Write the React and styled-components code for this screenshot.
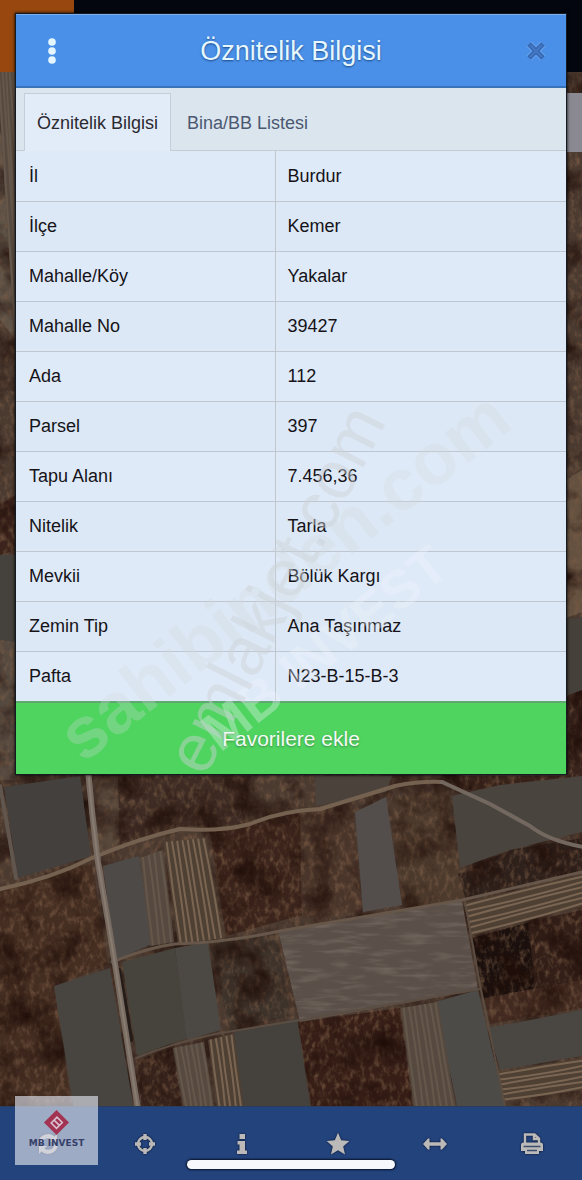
import React, { useState } from 'react';
import styled, { createGlobalStyle } from 'styled-components';

const GlobalStyle = createGlobalStyle`
    * {
        box-sizing: border-box;
    }

    body {
        margin: 0;
        background: #40362f;
        font-family: "Liberation Sans", Arial, Helvetica, sans-serif;
    }

    button {
        font-family: inherit;
        border: none;
        cursor: pointer;
    }
`;

const Screen = styled.main`
    position: relative;
    display: grid;
    grid-template-columns: minmax(0, 1fr);
    min-height: 100vh;
    overflow: hidden;
`;

const MapView = styled.div`
    grid-area: 1 / 1;
    display: flex;
    flex-direction: column;
`;

const TopBar = styled.div`
    display: flex;
    height: 72px;
    background: #03050f;
`;

const TopBarLogo = styled.div`
    width: 74px;
    background: #98480f;
`;

const MapArea = styled.div`
    position: relative;
    flex: 1;
`;

const MapImage = styled.svg`
    position: absolute;
    width: 100%;
    height: 100%;
`;

const MapControl = styled.div`
    position: absolute;
    top: 21px;
    right: 0;
    width: 40px;
    height: 59px;
    background: #8a8992;
`;

const Toolbar = styled.nav`
    position: relative;
    display: flex;
    height: 74px;
    padding-right: 2px;
    background: #23437c;
    border-top: 1px solid #2c3c5c;
`;

const ToolButton = styled.button`
    flex: 1;
    display: flex;
    align-items: center;
    justify-content: center;
    padding: 0;
    background: transparent;
    color: #bcbab8;

    svg {
        width: 24px;
        height: 24px;
        filter: drop-shadow(0 0 1px #08142c);
    }
`;

const HomeIndicator = styled.div`
    position: absolute;
    left: 50%;
    bottom: 11px;
    width: 208px;
    height: 9px;
    transform: translateX(-50%);
    border-radius: 5px;
    background: #f6f8fc;
    box-shadow: 0 0 2px 1px #081226;
`;

const Badge = styled.div`
    position: absolute;
    left: 15px;
    bottom: 15px;
    display: flex;
    flex-direction: column;
    align-items: center;
    width: 83px;
    height: 69px;
    padding-top: 13px;
    background: rgba(222, 224, 236, 0.66);

    svg {
        width: 27px;
        height: 27px;
    }
`;

const BadgeText = styled.span`
    margin-top: 2px;
    color: #36406a;
    font-family: "DejaVu Sans", sans-serif;
    font-size: 9px;
    font-weight: bold;
    line-height: 10px;
    white-space: nowrap;
`;

const Overlay = styled.div`
    grid-area: 1 / 1;
    z-index: 10;
    align-self: start;
    padding: 14px 16px;
`;

const Dialog = styled.section`
    display: flex;
    flex-direction: column;
    background: #dfeaf7;
    box-shadow: 0 0 0 1px #151b22, 0 0 3px 1px #000;
`;

const DialogHeader = styled.header`
    display: grid;
    grid-template-columns: 60px minmax(0, 1fr) 60px;
    align-items: center;
    height: 74px;
    background: #4a90e8;
    border-top: 1px solid #7eaeea;
    border-bottom: 2px solid #3a74b8;
`;

const DialogTitle = styled.h1`
    margin: 0;
    color: #e6f7ff;
    font-size: 27px;
    font-weight: normal;
    line-height: 32px;
    text-align: center;
    text-shadow: 0 1px 2px #1d4a86;
`;

const HeaderButton = styled.button`
    display: flex;
    align-items: center;
    justify-content: center;
    height: 44px;
    padding: 0;
    margin: 0 0 0 ${p => p.$inset || '0'};
    background: transparent;

    svg {
        width: 28px;
        height: 28px;
    }
`;

const Tabs = styled.div`
    display: flex;
    height: 63px;
    padding: 5px 8px 0;
    background: #dae5ee;
    border-bottom: 1px solid #c3cbd3;
`;

const Tab = styled.button`
    padding: 0 ${p => (p.$active ? '12px' : '15px')};
    margin-bottom: -1px;
    background: ${p => (p.$active ? '#e2ecf9' : 'transparent')};
    border: 1px solid ${p => (p.$active ? '#c5ced8' : 'transparent')};
    border-bottom: none;
    color: ${p => (p.$active ? '#2c2a30' : '#4c5872')};
    font-size: 18px;
    line-height: 22px;
    white-space: nowrap;
`;

const InfoTable = styled.table`
    width: 100%;
    table-layout: fixed;
    border-collapse: collapse;
    color: #151318;
    font-size: 18px;
    line-height: 22px;
`;

const Row = styled.tr`
    height: 50px;
    background: #dfeaf8;

    &:nth-child(even) {
        background: #dce8f5;
    }

    & + & {
        border-top: 1px solid #c0c6cf;
    }
`;

const Label = styled.th`
    width: 259px;
    padding: 0 13px;
    border-right: 1px solid #bfc6ce;
    font-weight: normal;
    text-align: left;
`;

const Value = styled.td`
    padding: 0 12px;
`;

const FavoriteButton = styled.button`
    height: 73px;
    padding: 0;
    background: #4fd45f;
    border-top: 2px solid #60a870;
    color: #f3fbf3;
    font-size: 21px;
    line-height: 26px;
    text-shadow: 0 1px 2px #3a8a48;
`;

const Watermark = styled.svg`
    position: absolute;
    z-index: 20;
    top: 0;
    left: 0;
    width: 100%;
    aspect-ratio: 582 / 1180;
    pointer-events: none;
    font-family: "Liberation Sans", Arial, sans-serif;
`;

const rows = [
    ['İl', 'Burdur'],
    ['İlçe', 'Kemer'],
    ['Mahalle/Köy', 'Yakalar'],
    ['Mahalle No', '39427'],
    ['Ada', '112'],
    ['Parsel', '397'],
    ['Tapu Alanı', '7.456,36'],
    ['Nitelik', 'Tarla'],
    ['Mevkii', 'Bölük Kargı'],
    ['Zemin Tip', 'Ana Taşınmaz'],
    ['Pafta', 'N23-B-15-B-3'],
];

// soil parcels: rough, unploughed ground
const soil = [
    ['#4b3a30', '0,60 582,60 582,1110 0,1110'],
    ['#5e5246', '0,60 16,60 16,340 0,320'],
    ['#3c241c', '0,505 16,495 16,550 0,555'],
    ['#564a40', '0,640 16,640 16,780 0,780'],
    ['#655140', '566,480 582,470 582,612 566,618'],
    ['#39241d', '566,695 582,690 582,780 566,780'],
    ['#56463a', '88,776 118,776 120,840 100,858'],
    ['#3e2c24', '118,776 250,776 245,826 180,826 120,850'],
    ['#38231b', '450,776 582,776 540,785 460,790'],
    ['#3b241b', '210,832 300,812 302,915 226,936'],
    ['#4a352a', '300,812 352,802 362,912 303,918'],
    ['#4c3a2d', '390,800 446,786 466,898 403,908'],
    ['#2e201b', '458,874 510,850 582,838 582,872 466,900'],
    ['#442d21', '0,892 92,863 108,965 54,986 72,1110 0,1110'],
    ['#3e332b', '209,942 277,932 290,1016 230,1032'],
    ['#1b100d', '472,938 530,922 540,1000 484,1000'],
    ['#331f18', '528,922 582,910 582,990 536,996'],
    ['#422a20', '484,998 582,980 582,1008 490,1024'],
    ['#371f17', '298,1022 400,1008 413,1110 312,1110'],
    ['#37231b', '137,1060 172,1048 183,1110 142,1110'],
];

// flat grey parcels
const fallow = [
    ['#45423e', '0,555 16,555 16,642 0,640'],
    ['#454039', '566,620 582,617 582,690 566,696'],
    ['#44403d', '4,787 80,776 91,856 18,878'],
    ['#4b423c', '315,776 392,776 386,792 316,806'],
    ['#4a443e', '452,796 500,785 582,776 582,832 510,850 460,868'],
    ['#4d4a48', '103,866 139,856 152,944 115,960'],
    ['#534e4b', '355,812 386,797 402,905 363,912'],
    ['#48443f', '54,986 110,968 134,1110 74,1110'],
    ['#47433d', '122,962 175,948 187,1038 137,1056'],
    ['#4c4844', '175,948 208,942 221,1030 187,1040'],
    ['#45413c', '234,1032 297,1018 311,1110 243,1110'],
    ['#4d4b47', '435,1002 478,990 506,1110 458,1110'],
    ['#4a4742', '488,1028 582,1010 582,1056 500,1070'],
    ['#5a5049', '278,930 462,901 478,990 300,1022'],
];

// ploughed parcels, as the two edges that the furrows run along
const ploughed = [
    { from: [[140, 858], [150, 946]], to: [[163, 850], [174, 942]], n: 4, soft: true },
    { from: [[164, 842], [178, 944]], to: [[206, 838], [224, 938]], n: 8 },
    { from: [[464, 903], [582, 874]], to: [[471, 936], [582, 906]], n: 6 },
    { from: [[498, 1072], [582, 1058]], to: [[503, 1102], [582, 1090]], n: 6 },
    { from: [[401, 1008], [414, 1108]], to: [[438, 1002], [456, 1108]], n: 7, soft: true },
    { from: [[173, 1048], [184, 1108]], to: [[204, 1042], [214, 1108]], n: 6, soft: true },
    { from: [[208, 1040], [217, 1108]], to: [[234, 1034], [244, 1108]], n: 5 },
    { from: [[-3, 70], [14, 330]], to: [[15, 70], [30, 330]], n: 5, soft: true },
];

const mix = (a, b, t) => [a[0] + (b[0] - a[0]) * t, a[1] + (b[1] - a[1]) * t];

function Furrows({ from, to, n, soft }) {
    const lines = Array.from({ length: n }, (_, i) => {
        const t = (i + 0.5) / n;
        const [x1, y1] = mix(from[0], to[0], t);
        const [x2, y2] = mix(from[1], to[1], t);
        const bend = i % 2 ? 2 : -1;
        return `M${x1} ${y1} Q${(x1 + x2) / 2 + bend} ${(y1 + y2) / 2 + bend} ${x2} ${y2}`;
    });
    return (
        <g>
            <polygon points={[from[0], from[1], to[1], to[0]].join(' ')} fill={soft ? '#564a40' : '#4f4034'} />
            <path d={lines.join('')} fill="none" stroke={soft ? '#65574a' : '#7a6552'} strokeWidth="2" />
        </g>
    );
}

function SatelliteMap() {
    return (
        <MapImage viewBox="0 72 582 1034" preserveAspectRatio="xMidYMid slice" aria-hidden="true">
            <defs>
                <filter id="grain" x="0" y="0" width="100%" height="100%" colorInterpolationFilters="sRGB">
                    <feTurbulence type="fractalNoise" baseFrequency="0.2 0.12" numOctaves="4" seed="7" />
                    <feColorMatrix values="0 0 0 0 0.48  0 0 0 0 0.36  0 0 0 0 0.27  1.8 0 0 0 -0.82" result="light" />
                    <feTurbulence type="fractalNoise" baseFrequency="0.03 0.03" numOctaves="5" seed="3" />
                    <feColorMatrix values="0 0 0 0 0.12  0 0 0 0 0.05  0 0 0 0 0.03  0 2.2 0 0 -0.95" result="dark" />
                    <feMerge>
                        <feMergeNode in="SourceGraphic" />
                        <feMergeNode in="light" />
                        <feMergeNode in="dark" />
                    </feMerge>
                </filter>
                <filter id="streaks" x="0" y="0" width="100%" height="100%" colorInterpolationFilters="sRGB">
                    <feTurbulence type="fractalNoise" baseFrequency="0.03 0.18" numOctaves="3" seed="12" />
                    <feColorMatrix values="0 0 0 0 0.5  0 0 0 0 0.45  0 0 0 0 0.42  1.6 0 0 0 -0.75" />
                    <feComposite operator="in" in2="SourceAlpha" />
                </filter>
            </defs>
            <g filter="url(#grain)">
                {soil.map(([fill, points]) => <polygon key={points} fill={fill} points={points} />)}
            </g>
            {fallow.map(([fill, points]) => <polygon key={points} fill={fill} points={points} />)}
            <polygon points="278,930 462,901 478,990 300,1022" filter="url(#streaks)" />
            {ploughed.map(field => <Furrows key={field.from.join()} {...field} />)}
            <g fill="none" strokeLinecap="round" strokeLinejoin="round">
                <path d="M0 786 Q10 840 16 878" stroke="#61564d" strokeWidth="4" />
                <path d="M0 889 Q50 879 92 858 Q140 838 180 829 Q220 832 250 824 Q280 811 320 809 Q360 797 395 786 Q420 781 442 782" stroke="#75614f" strokeWidth="4" />
                <path d="M442 782 L490 804 L530 826 Q550 842 590 848" stroke="#736860" strokeWidth="4" />
                <path d="M112 962 Q150 947 175 944 Q230 942 280 931 L462 900 L582 872" stroke="#66574a" strokeWidth="3" />
                <path d="M136 1058 Q170 1044 215 1034 L300 1020 L480 989" stroke="#5b4d42" strokeWidth="2" />
                <path d="M465 902 L480 985 L505 1106" stroke="#5a4c40" strokeWidth="2" />
                <path d="M119 970 Q127 1010 131 1040" stroke="#231c18" strokeWidth="4" />
                <path d="M88 770 Q92 815 98 862 Q108 920 116 970 Q128 1045 138 1110" stroke="#776b61" strokeWidth="6" />
                <path d="M88 770 Q92 815 98 862 Q108 920 116 970 Q128 1045 138 1110" stroke="#887b70" strokeWidth="2" />
            </g>
        </MapImage>
    );
}

const stroked = { viewBox: '0 0 24 24', fill: 'none', stroke: 'currentColor', 'aria-hidden': true };

const tools = [
    {
        label: 'Yenile',
        icon: (
            <svg {...stroked} strokeWidth="4">
                <path d="M4 11a8 8 0 0 1 14-4M20 13a8 8 0 0 1-14 4" />
                <path d="M21 2v8h-8zM3 22v-8h8z" fill="currentColor" stroke="none" />
            </svg>
        ),
    },
    {
        label: 'Konum',
        icon: (
            <svg {...stroked} strokeWidth="2.4">
                <circle cx="12" cy="12" r="7" />
                <path d="M12 2v6M12 16v6M2 12h6M16 12h6" strokeWidth="3.4" />
            </svg>
        ),
    },
    {
        label: 'Bilgi',
        icon: (
            <svg {...stroked} fill="currentColor" stroke="none">
                <path d="M9.500 2h5.500v5H9.500zM7.500 9H15v9.500h2V22H7v-3.500h2.500v-6h-2z" />
            </svg>
        ),
    },
    {
        label: 'Favoriler',
        icon: (
            <svg {...stroked} fill="currentColor" stroke="none">
                <path d="M12 .8l3.200 7.500 8.100.700-6.100 5.400 1.800 8L12 18.200l-7 4.200 1.800-8L.7 9l8.100-.7z" />
            </svg>
        ),
    },
    {
        label: 'Ölç',
        icon: (
            <svg {...stroked} fill="currentColor" stroke="none">
                <path d="M0 12l5-5.500h1.500v3.700h11V6.500H19l5 5.500-5 5.500h-1.500v-3.700h-11v3.700H5z" />
            </svg>
        ),
    },
    {
        label: 'Yazdır',
        icon: (
            <svg {...stroked} strokeWidth="2.4">
                <path d="M5 11V2.500h9.500l4.500 4V11M14 3v4h5" />
                <path d="M1 19v-6q0-2.500 2.500-2.500h17q2.500 0 2.500 2.500v6h-4v3H5v-3z" fill="currentColor" stroke="none" />
                <path d="M3.500 14.500h17M7 18.500h10" stroke="#3d4d6e" strokeWidth="1.600" />
            </svg>
        ),
    },
];

export default function App() {
    const [tab, setTab] = useState(0);

    return (
        <>
            <GlobalStyle />
            <Screen>
                <MapView>
                    <TopBar>
                        <TopBarLogo />
                    </TopBar>
                    <MapArea>
                        <SatelliteMap />
                        <MapControl />
                    </MapArea>
                    <Toolbar>
                        {tools.map(({ label, icon }) => (
                            <ToolButton key={label} type="button" aria-label={label}>{icon}</ToolButton>
                        ))}
                        <HomeIndicator />
                        <Badge>
                            <svg viewBox="0 0 28 28" aria-hidden="true">
                                <path d="M14 1l13 13-13 13L1 14z" fill="#a33353" />
                                <path d="M8.500 14.500l6-6 5.500 5.500-6 6zM11.500 11.500l5.500 5.500" fill="none" stroke="#d9c3d2" strokeWidth="1.600" />
                            </svg>
                            <BadgeText>MB INVEST</BadgeText>
                        </Badge>
                    </Toolbar>
                </MapView>

                <Overlay>
                    <Dialog role="dialog" aria-labelledby="dialog-title">
                        <DialogHeader>
                            <HeaderButton type="button" aria-label="Menü" $inset="12px">
                                <svg viewBox="0 0 28 28" fill="#e4f6ff">
                                    <circle cx="14" cy="5" r="3.800" />
                                    <circle cx="14" cy="14" r="3.800" />
                                    <circle cx="14" cy="23" r="3.800" />
                                </svg>
                            </HeaderButton>
                            <DialogTitle id="dialog-title">Öznitelik Bilgisi</DialogTitle>
                            <HeaderButton type="button" aria-label="Kapat">
                                <svg viewBox="0 0 28 28" fill="none">
                                    <path d="M7 7l14 14M21 7L7 21" stroke="#6ba2ea" strokeWidth="7" />
                                    <path d="M7 7l14 14M21 7L7 21" stroke="#3568b4" strokeWidth="5" />
                                    <path d="M8 8l12 12M20 8L8 20" stroke="#4577c2" strokeWidth="2" />
                                </svg>
                            </HeaderButton>
                        </DialogHeader>
                        <Tabs role="tablist">
                            {['Öznitelik Bilgisi', 'Bina/BB Listesi'].map((name, i) => (
                                <Tab
                                    key={name}
                                    type="button"
                                    role="tab"
                                    aria-selected={tab === i}
                                    $active={tab === i}
                                    onClick={() => setTab(i)}
                                >
                                    {name}
                                </Tab>
                            ))}
                        </Tabs>
                        <InfoTable>
                            <tbody>
                                {rows.map(([label, value]) => (
                                    <Row key={label}>
                                        <Label scope="row">{label}</Label>
                                        <Value>{value}</Value>
                                    </Row>
                                ))}
                            </tbody>
                        </InfoTable>
                        <FavoriteButton type="button">Favorilere ekle</FavoriteButton>
                    </Dialog>
                </Overlay>

                <Watermark viewBox="0 0 582 1180" aria-hidden="true">
                    <text transform="translate(83 764) rotate(-38)" fontSize="72" fontWeight="bold" fill="#cfd6dc" fillOpacity="0.28">
                        sahibinden.com
                    </text>
                    <text transform="translate(452 572) rotate(-38)" fontSize="54" fontWeight="bold" textAnchor="end" fill="#eef4fb" fillOpacity="0.35">
                        MB INVEST
                    </text>
                    <text transform="translate(205 778) rotate(-63)" fontSize="68" fill="#cdd0d4" fillOpacity="0.45">
                        emlakjet.com
                    </text>
                </Watermark>
            </Screen>
        </>
    );
}
